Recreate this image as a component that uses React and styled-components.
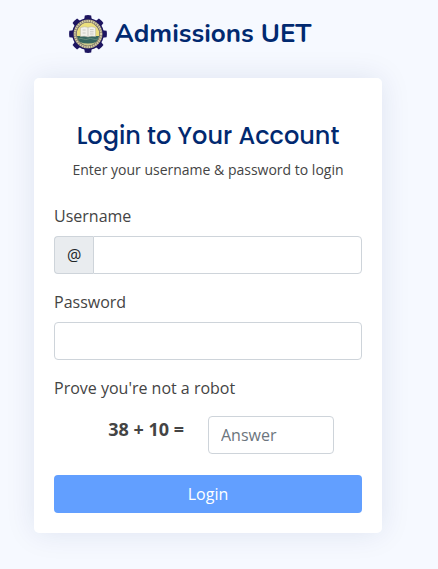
import styled, { createGlobalStyle } from "styled-components";

const teeth = [0, 45, 90, 135, 180, 225, 270, 315];

const GearLogo = () => (
  <svg width="38" height="38" viewBox="0 0 38 38" aria-hidden="true">
    <g fill="#1d1560">
      {teeth.map((angle) => (
        <path
          key={angle}
          d="M15.2 5 L15.8 0.4 Q19 -0.2 22.2 0.4 L22.8 5 Z"
          transform={`rotate(${angle} 19 19)`}
        />
      ))}
      <circle cx="19" cy="19" r="15.8" />
    </g>
    {/* lettering band */}
    <circle
      cx="19"
      cy="19"
      r="13"
      fill="none"
      stroke="#8f876f"
      strokeWidth="3"
    />
    <circle
      cx="19"
      cy="19"
      r="13.1"
      fill="none"
      stroke="#d8d0ab"
      strokeWidth="2"
      strokeDasharray="1.3 1"
    />
    <circle cx="19" cy="19" r="11.4" fill="#ebdf7c" />
    <path d="M7.8 21 H30.2 A11.4 11.4 0 0 1 7.8 21 Z" fill="#376660" />
    <path
      d="M9.5 24 q2.4 -1.2 4.8 0 t4.8 0 t4.8 0 t4.8 0"
      fill="none"
      stroke="#6f9482"
      strokeWidth="0.8"
    />
    <path d="M10.6 27 Q19 30 27.4 27 Q19 34 10.6 27 Z" fill="#cfc98c" />
    <path
      d="M11.4 12.6 Q15.8 11 19 12.4 Q22.2 11 26.6 12.6 V21.6 Q22.2 20.6 19 22 Q15.8 20.6 11.4 21.6 Z"
      fill="#f1f0ea"
      stroke="#b3b19c"
      strokeWidth="0.5"
    />
    <path
      d="M19 12.6 V21.8 M13.6 15 h3 M13.6 18 h3 M21 14.6 h3.6 M21 16.8 h3.6 M21 19 h3.6"
      stroke="#b9b9b2"
      strokeWidth="0.7"
    />
  </svg>
);

const App = () => {
  return (
    <>
      <GlobalStyle />
      <Page>
        <Brand href="#">
          <GearLogo />
          <span>Admissions UET</span>
        </Brand>
        <Card>
          <CardTitle>Login to Your Account</CardTitle>
          <CardText>Enter your username &amp; password to login</CardText>
          <Form onSubmit={(e) => e.preventDefault()}>
            <Field>
              <Label htmlFor="username">Username</Label>
              <InputGroup>
                <Prefix>@</Prefix>
                <Input id="username" type="text" $grouped />
              </InputGroup>
            </Field>
            <Field>
              <Label htmlFor="password">Password</Label>
              <Input id="password" type="password" />
            </Field>
            <Field>
              <Label htmlFor="answer">Prove you&apos;re not a robot</Label>
              <Captcha>
                <Question>38 + 10 =</Question>
                <Input id="answer" type="text" placeholder="Answer" />
              </Captcha>
            </Field>
            <LoginButton type="submit">Login</LoginButton>
          </Form>
        </Card>
      </Page>
    </>
  );
};

const GlobalStyle = createGlobalStyle`
  * {
    box-sizing: border-box;
  }
  body {
    margin: 0;
    min-height: 100vh;
    background: #f6f9ff;
    color: #444444;
    font-family: "Open Sans", sans-serif;
    font-size: 16px;
    line-height: 24px;
  }
`;

const Page = styled.main`
  padding: 14px 56px 36px 34px;
  display: flex;
  flex-direction: column;
  align-items: center;
`;

const Brand = styled.a`
  display: flex;
  align-items: center;
  gap: 8px;
  height: 40px;
  margin-right: 36px;
  color: #012970;
  font-family: Nunito, Lato, sans-serif;
  font-size: 26px;
  font-weight: 700;
  line-height: 32px;
  white-space: nowrap;
  text-decoration: none;
`;

const Card = styled.section`
  width: 100%;
  max-width: 480px;
  margin-top: 24px;
  padding: 42px 20px 20px;
  background: #ffffff;
  border-radius: 5px;
  box-shadow: 0 0 30px rgba(1, 41, 112, 0.1);
`;

const CardTitle = styled.h1`
  margin: 0;
  color: #012970;
  font-family: Poppins, Inter, sans-serif;
  font-size: 24px;
  font-weight: 500;
  line-height: 32px;
  text-align: center;
`;

const CardText = styled.p`
  margin: 6px 0 22px;
  font-size: 14px;
  text-align: center;
`;

const Form = styled.form`
  display: flex;
  flex-direction: column;
  gap: 16px;
`;

const Field = styled.div`
  display: flex;
  flex-direction: column;
  gap: 8px;
`;

const Label = styled.label`
  display: block;
`;

const InputGroup = styled.div`
  display: flex;
`;

const Prefix = styled.span`
  padding: 6px 12px;
  background: #e9ecef;
  border: 1px solid #ced4da;
  border-right: 0;
  border-radius: 4px 0 0 4px;
  color: #212529;
`;

const Input = styled.input`
  flex: 1;
  width: 100%;
  min-width: 0;
  height: 38px;
  min-height: 38px;
  padding: 6px 12px;
  background: #ffffff;
  border: 1px solid #ced4da;
  border-radius: ${(props) => (props.$grouped ? "0 4px 4px 0" : "4px")};
  color: #212529;
  font: inherit;
  &::placeholder {
    color: #6c757d;
    opacity: 1;
  }
`;

const Captcha = styled.div`
  display: grid;
  grid-template-columns: 1fr 126px;
  column-gap: 24px;
  padding: 8px 28px 5px 0;
`;

const Question = styled.strong`
  font-size: 18px;
  line-height: 26px;
  text-align: right;
`;

const LoginButton = styled.button`
  height: 38px;
  padding: 6px 12px;
  background: #629fff;
  border: 0;
  border-radius: 4px;
  color: #ffffff;
  font: inherit;
  cursor: pointer;
`;

export default App;
